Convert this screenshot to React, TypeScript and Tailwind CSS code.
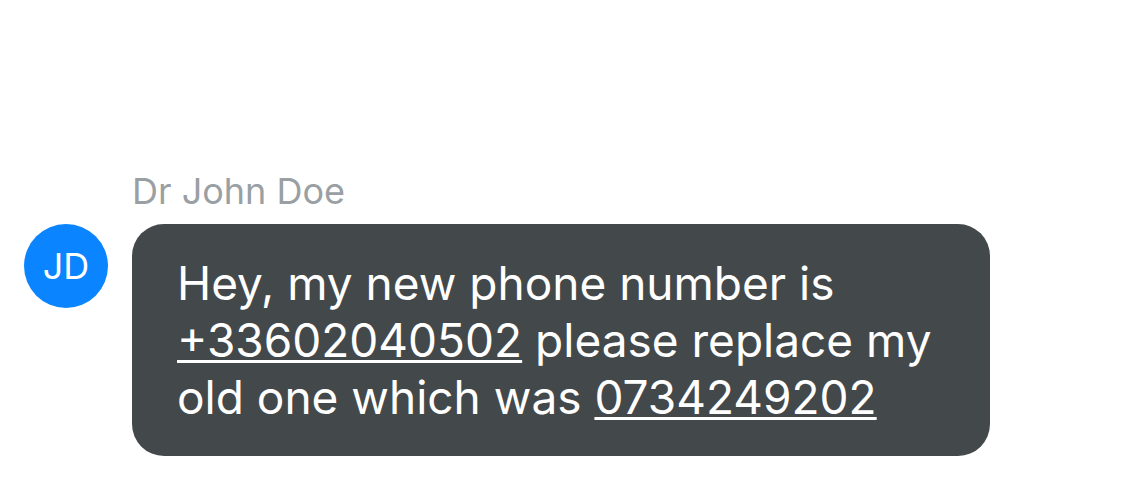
export default function App() {
  return (
    <main className="min-h-screen bg-white px-6 pt-[168px] font-['Inter',sans-serif]">
      <article className="grid grid-cols-[84px_minmax(0,858px)] gap-x-6">
        <h2 className="col-start-2 h-14 text-[36px] leading-[46px] text-[#9a9fa3]">Dr John Doe</h2>
        <div className="flex size-[84px] items-center justify-center rounded-full bg-[#0a84ff] text-[36px] text-white">
          JD
        </div>
        <p className="rounded-[32px] bg-[#43484b] pt-[31px] pr-10 pb-[30px] pl-[45px] text-[46px] leading-[57px] text-white">
          Hey, my new phone number is{' '}
          <a href="tel:+33602040502" className="underline decoration-[3px] underline-offset-[3px] [text-decoration-skip-ink:none]">+33602040502</a>{' '}
          please replace my old one which was{' '}
          <a href="tel:0734249202" className="underline decoration-[3px] underline-offset-[3px] [text-decoration-skip-ink:none]">0734249202</a>
        </p>
      </article>
    </main>
  );
}
